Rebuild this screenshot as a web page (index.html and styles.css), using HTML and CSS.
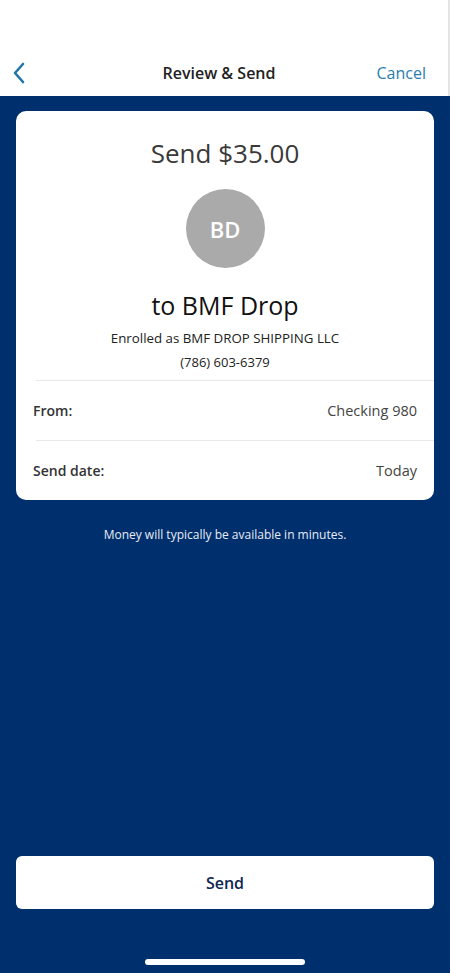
FILE: index.html
```html
<!DOCTYPE html>
<html lang="en">
<head>
    <meta charset="UTF-8">
    <title>Review &amp; Send</title>
    <link rel="stylesheet" href="styles.css">
</head>
<body>

<div class="screen">
    <div class="top">
        <div class="nav">
            <a class="back" href="javascript:;">
                <svg width="14" height="22" viewBox="0 0 14 22">
                    <path d="M11 2 L3 11 L11 20" fill="none" stroke="#1f76aa" stroke-width="2.6" stroke-linecap="round" stroke-linejoin="round"/>
                </svg>
            </a>
            <div class="title">Review &amp; Send</div>
            <a class="cancel" href="javascript:;">Cancel</a>
        </div>
    </div>

    <div class="main">
        <div class="card">
            <div class="amount">Send $35.00</div>
            <div class="avatar">BD</div>
            <div class="payee">to BMF Drop</div>
            <div class="enrolled">Enrolled as BMF DROP SHIPPING LLC</div>
            <div class="phone">(786) 603-6379</div>

            <div class="row">
                <span class="label">From:</span>
                <span class="value">Checking 980</span>
            </div>
            <div class="row">
                <span class="label">Send date:</span>
                <span class="value">Today</span>
            </div>
        </div>

        <p class="note">Money will typically be available in minutes.</p>

        <div class="spacer"></div>

        <a class="send-btn" href="javascript:;">Send</a>

        <div class="home-bar"></div>
    </div>
</div>

</body>
</html>
```

FILE: styles.css
```css
*{
    margin: 0;
    padding: 0;
    box-sizing: border-box;
}

body{
    width: 450px;
    height: 973px;
    font-family: "Open Sans", "Liberation Sans", sans-serif;
    background-color: #002f6e;
}

a{
    text-decoration: none;
}

.screen{
    height: 973px;
    display: flex;
    flex-direction: column;
}

/*顶部白色导航*/
.top{
    height: 96px;
    background-color: #fff;
    border-right: 2px solid #e4e4e4;
    display: flex;
    align-items: flex-end;
}

.nav{
    width: 100%;
    height: 46px;
    padding: 0 22px 0 12px;
    display: flex;
    align-items: center;
    justify-content: space-between;
}

.back{
    width: 60px;
    display: flex;
    align-items: center;
}

.title{
    font-size: 16px;
    font-weight: 600;
    color: #222;
}

.cancel{
    width: 60px;
    text-align: right;
    font-size: 16px;
    color: #2a7ead;
}

.main{
    flex: 1;
    padding: 15px 16px 0;
    display: flex;
    flex-direction: column;
}

/*信息卡片*/
.card{
    background-color: #fff;
    border-radius: 10px;
    padding-top: 24px;
    display: flex;
    flex-direction: column;
    align-items: center;
}

.amount{
    font-size: 26px;
    line-height: 36px;
    color: #3a3a3a;
}

.avatar{
    width: 79px;
    height: 79px;
    margin-top: 18px;
    border-radius: 50%;
    background-color: #aaa;
    color: #fff;
    font-size: 22px;
    font-weight: 600;
    display: flex;
    align-items: center;
    justify-content: center;
}

.payee{
    margin-top: 20px;
    font-size: 25px;
    line-height: 34px;
    color: #111;
}

.enrolled{
    margin-top: 7px;
    font-size: 13.3px;
    line-height: 18px;
    color: #222;
}

.phone{
    margin-top: 6px;
    font-size: 13px;
    line-height: 18px;
    color: #222;
    padding-bottom: 9px;
}

.row{
    align-self: stretch;
    margin-left: 20px;
    height: 60px;
    padding: 0 17px 0 0;
    border-top: 1px solid #e8e8e8;
    display: flex;
    align-items: center;
    justify-content: space-between;
    font-size: 14.5px;
}

.label{
    margin-left: -3px;
    color: #333;
    font-size: 14px;
    font-weight: 600;
}

.value{
    color: #444;
}

.note{
    margin-top: 26px;
    text-align: center;
    font-size: 12px;
    color: #e8ecf4;
}

.spacer{
    flex: 1;
}

/*底部按钮*/
.send-btn{
    height: 53px;
    border-radius: 6px;
    background-color: #fff;
    color: #0e2552;
    font-size: 16px;
    font-weight: 600;
    display: flex;
    align-items: center;
    justify-content: center;
}

.home-bar{
    width: 160px;
    height: 6px;
    margin: 50px auto 8px;
    border-radius: 3px;
    background-color: #fff;
}
```
